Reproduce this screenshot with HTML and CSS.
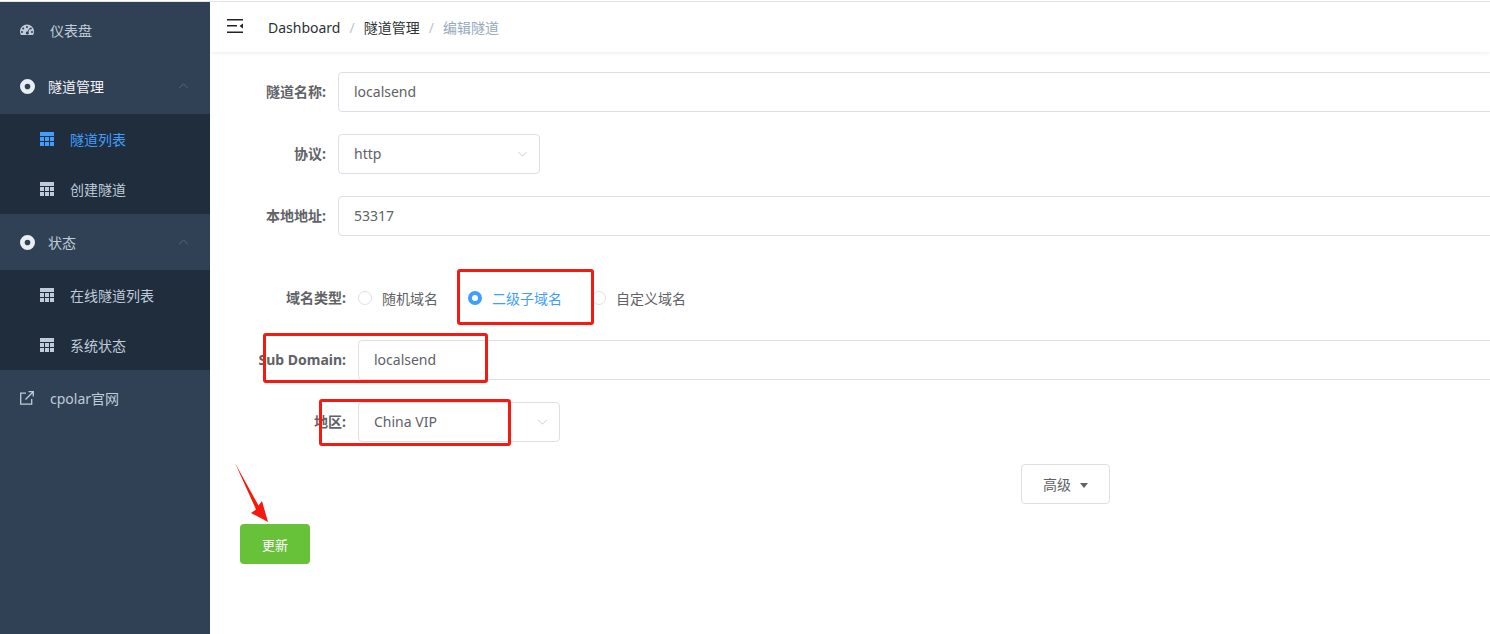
FILE: index.html
```html
<!DOCTYPE html>
<html lang="en">

<head>
    <meta charset="UTF-8" />
    <meta name="viewport" content="width=device-width, initial-scale=1.0" />
    <title>编辑隧道</title>
    <link rel="stylesheet" href="styles.css">
</head>

<body>
    <div class="app">
        <!-- Sidebar -->
        <aside class="sidebar">
            <a class="menu-item">
                <svg class="menu-icon" viewBox="0 0 14 14"><path fill="currentColor" fill-rule="evenodd" d="M7 1.5a7 7 0 0 0-7 7c0 1.3.3 2.4.9 3.5h12.2c.6-1.1.9-2.2.9-3.5a7 7 0 0 0-7-7zM7 3a1 1 0 1 1 0 2 1 1 0 0 1 0-2zM3.2 4.4a1 1 0 1 1 0 2 1 1 0 0 1 0-2zm7.6 0a1 1 0 1 1 0 2 1 1 0 0 1 0-2zM2 8a1 1 0 1 1 0 2 1 1 0 0 1 0-2zm10 0a1 1 0 1 1 0 2 1 1 0 0 1 0-2zM9.3 5.2l.7.4-1.6 3.3a1.5 1.5 0 1 1-.8-.4z"/></svg>
                <span>仪表盘</span>
            </a>
            <div class="menu-title open">
                <svg class="menu-icon ring" viewBox="0 0 16 16"><path fill="currentColor" fill-rule="evenodd" d="M8 0a8 8 0 1 1 0 16A8 8 0 0 1 8 0zm0 5a3 3 0 1 0 0 6 3 3 0 0 0 0-6z"/></svg>
                <span>隧道管理</span>
                <svg class="chevron" viewBox="0 0 12 7"><path d="M1 6l5-5 5 5" /></svg>
            </div>
            <div class="submenu">
                <a class="sub-item active">
                    <svg class="table-icon" viewBox="0 0 14 14"><path fill="currentColor" d="M0 0h14v4H0zM0 5h4v4H0zM5 5h4v4H5zM10 5h4v4h-4zM0 10h4v4H0zM5 10h4v4H5zM10 10h4v4h-4z"/></svg>
                    <span>隧道列表</span>
                </a>
                <a class="sub-item">
                    <svg class="table-icon" viewBox="0 0 14 14"><path fill="currentColor" d="M0 0h14v4H0zM0 5h4v4H0zM5 5h4v4H5zM10 5h4v4h-4zM0 10h4v4H0zM5 10h4v4H5zM10 10h4v4h-4z"/></svg>
                    <span>创建隧道</span>
                </a>
            </div>
            <div class="menu-title">
                <svg class="menu-icon ring" viewBox="0 0 16 16"><path fill="currentColor" fill-rule="evenodd" d="M8 0a8 8 0 1 1 0 16A8 8 0 0 1 8 0zm0 5a3 3 0 1 0 0 6 3 3 0 0 0 0-6z"/></svg>
                <span>状态</span>
                <svg class="chevron" viewBox="0 0 12 7"><path d="M1 6l5-5 5 5" /></svg>
            </div>
            <div class="submenu">
                <a class="sub-item">
                    <svg class="table-icon" viewBox="0 0 14 14"><path fill="currentColor" d="M0 0h14v4H0zM0 5h4v4H0zM5 5h4v4H5zM10 5h4v4h-4zM0 10h4v4H0zM5 10h4v4H5zM10 10h4v4h-4z"/></svg>
                    <span>在线隧道列表</span>
                </a>
                <a class="sub-item">
                    <svg class="table-icon" viewBox="0 0 14 14"><path fill="currentColor" d="M0 0h14v4H0zM0 5h4v4H0zM5 5h4v4H5zM10 5h4v4h-4zM0 10h4v4H0zM5 10h4v4H5zM10 10h4v4h-4z"/></svg>
                    <span>系统状态</span>
                </a>
            </div>
            <a class="menu-item">
                <svg class="menu-icon" viewBox="0 0 14 14"><path fill="none" stroke="currentColor" stroke-width="1.3" d="M6 2.2H.7v11h11V8M5.5 8.5L13 1M8.5.7h4.8v4.8"/></svg>
                <span>cpolar官网</span>
            </a>
        </aside>

        <main class="main">
            <!-- Top bar -->
            <header class="navbar">
                <svg class="hamburger" viewBox="0 0 16 14"><path fill="#222" d="M0 0h16v1.6H0zM0 6h10v1.6H0zM0 12.400h16V14H0zM16 4.500v5l-3.500-2.500z"/></svg>
                <nav class="breadcrumb">
                    <span>Dashboard</span>
                    <i>/</i>
                    <span>隧道管理</span>
                    <i>/</i>
                    <span class="current">编辑隧道</span>
                </nav>
            </header>

            <form class="tunnel-form">
                <div class="form-row">
                    <label>隧道名称:</label>
                    <div class="control">localsend</div>
                </div>
                <div class="form-row">
                    <label>协议:</label>
                    <div class="control select">http
                        <svg class="caret" viewBox="0 0 12 7"><path d="M1 1l5 5 5-5" /></svg>
                    </div>
                </div>
                <div class="form-row">
                    <label>本地地址:</label>
                    <div class="control">53317</div>
                </div>

                <div class="form-row wide gap-top">
                    <label>域名类型:</label>
                    <div class="radio-group">
                        <span class="radio"><b></b>随机域名</span>
                        <span class="radio checked"><b></b>二级子域名</span>
                        <span class="radio"><b></b>自定义域名</span>
                    </div>
                </div>
                <div class="form-row wide">
                    <label>Sub Domain:</label>
                    <div class="control">localsend</div>
                </div>
                <div class="form-row wide">
                    <label>地区:</label>
                    <div class="control select">China VIP
                        <svg class="caret" viewBox="0 0 12 7"><path d="M1 1l5 5 5-5" /></svg>
                    </div>
                </div>

                <div class="advanced-row">
                    <button type="button" class="advanced-btn">高级<em></em></button>
                </div>
                <button type="button" class="submit-btn">更新</button>
            </form>

            <!-- Red annotations drawn over the form -->
            <div class="mark mark-radio"></div>
            <div class="mark mark-domain"></div>
            <div class="mark mark-region"></div>
            <svg class="arrow" viewBox="0 0 40 64"><path fill="#f5190f" d="M0 0L23.500 42.500 27 38 33 59 16 50 21 46.500z"/></svg>
        </main>
    </div>
</body>

</html>
```
FILE: styles.css
```css
* {
    box-sizing: border-box;
}

html,
body {
    height: 100%;
    margin: 0;
    overflow: hidden;
}

body {
    font-family: "Noto Sans", "Noto Sans CJK SC", sans-serif;
    font-size: 14px;
    color: #606266;
    background-color: white;
}

.app {
    display: flex;
    height: 100%;
    padding-top: 2px;
    position: relative;
    background: linear-gradient(#fff 1px, #e4e4e4 1px, #e4e4e4 2px, #fff 2px);
}

/* Sidebar */
.sidebar {
    width: 210px;
    flex-shrink: 0;
    background-color: #304156;
    color: #bfcbd9;
}

.menu-item,
.menu-title {
    display: flex;
    align-items: center;
    height: 56px;
    padding-left: 20px;
    position: relative;
}

.menu-item span {
    margin-left: 16px;
}

.menu-title span {
    margin-left: 13px;
}

.menu-title.open {
    color: #f4f4f5;
}

.menu-icon {
    width: 14px;
    height: 14px;
}

.menu-icon.ring {
    width: 15px;
    height: 15px;
    color: #e9eef3;
}

.chevron {
    position: absolute;
    right: 21px;
    top: 25px;
    width: 11px;
    height: 6px;
    fill: none;
    stroke: #5f6e80;
    stroke-width: 1;
}

.submenu {
    background-color: #1f2d3d;
}

.sub-item {
    display: flex;
    align-items: center;
    height: 50px;
    padding-left: 40px;
}

.sub-item span {
    margin-left: 16px;
}

.sub-item.active {
    color: #409eff;
}

.table-icon {
    width: 14px;
    height: 14px;
}

/* Top bar */
.main {
    flex: 1;
    min-width: 0;
    overflow: hidden;
}

.navbar {
    display: flex;
    align-items: center;
    height: 50px;
    padding-left: 17px;
    box-shadow: 0 1px 4px rgba(0, 21, 41, 0.08);
}

.hamburger {
    width: 16px;
    height: 14px;
    margin-top: -3px;
}

.breadcrumb {
    margin-left: 25px;
    color: #303133;
    display: flex;
    align-items: center;
}

.breadcrumb i {
    font-style: normal;
    color: #c0c4cc;
    margin: 0 9px;
}

.breadcrumb .current {
    color: #97a8be;
}

/* Form */
.tunnel-form {
    width: 1651px;
    margin-left: 30px;
    padding-top: 20px;
}

.form-row {
    display: flex;
    margin-bottom: 22px;
}

.form-row label {
    width: 98px;
    padding-right: 12px;
    flex-shrink: 0;
    text-align: right;
    line-height: 40px;
    font-weight: bold;
}

.form-row.wide label {
    width: 118px;
}

.form-row.gap-top {
    margin-top: 42px;
}

.control {
    flex: 1;
    height: 40px;
    line-height: 38px;
    padding: 0 15px;
    border: 1px solid #dcdfe6;
    border-radius: 4px;
    position: relative;
}

.control.select {
    flex: none;
    width: 202px;
}

.caret {
    position: absolute;
    right: 11px;
    top: 16px;
    width: 11px;
    height: 6px;
    fill: none;
    stroke: #c0c4cc;
    stroke-width: 1;
}

.radio-group {
    display: flex;
    align-items: center;
    height: 40px;
}

.radio {
    display: flex;
    align-items: center;
    margin-right: 30px;
}

.radio b {
    width: 14px;
    height: 14px;
    margin-right: 10px;
    border: 1px solid #dcdfe6;
    border-radius: 50%;
}

.radio.checked {
    color: #409eff;
}

.radio.checked b {
    border: 4px solid #409eff;
    background-color: white;
    box-shadow: inset 0 0 0 1px white;
}

.advanced-row {
    text-align: center;
    margin-bottom: 20px;
}

.advanced-btn {
    width: 89px;
    height: 40px;
    padding: 0;
    font: inherit;
    color: #606266;
    background-color: white;
    border: 1px solid #dcdfe6;
    border-radius: 4px;
}

.advanced-btn em {
    display: inline-block;
    margin-left: 9px;
    vertical-align: 2px;
    border-top: 5px solid #606266;
    border-left: 4.500px solid transparent;
    border-right: 4.500px solid transparent;
}

.submit-btn {
    display: block;
    width: 70px;
    height: 40px;
    padding: 0;
    font: inherit;
    font-size: 13px;
    color: white;
    background-color: #67c23a;
    border: none;
    border-radius: 4px;
}

/* Annotations */
.mark {
    position: absolute;
    border: 3px solid #f5190f;
    border-radius: 3px;
}

.mark-radio {
    left: 457px;
    top: 269px;
    width: 137px;
    height: 56px;
}

.mark-domain {
    left: 263px;
    top: 333px;
    width: 225px;
    height: 50px;
}

.mark-region {
    left: 319px;
    top: 399px;
    width: 192px;
    height: 47px;
}

.arrow {
    position: absolute;
    left: 235px;
    top: 463px;
    width: 40px;
    height: 64px;
}
```
